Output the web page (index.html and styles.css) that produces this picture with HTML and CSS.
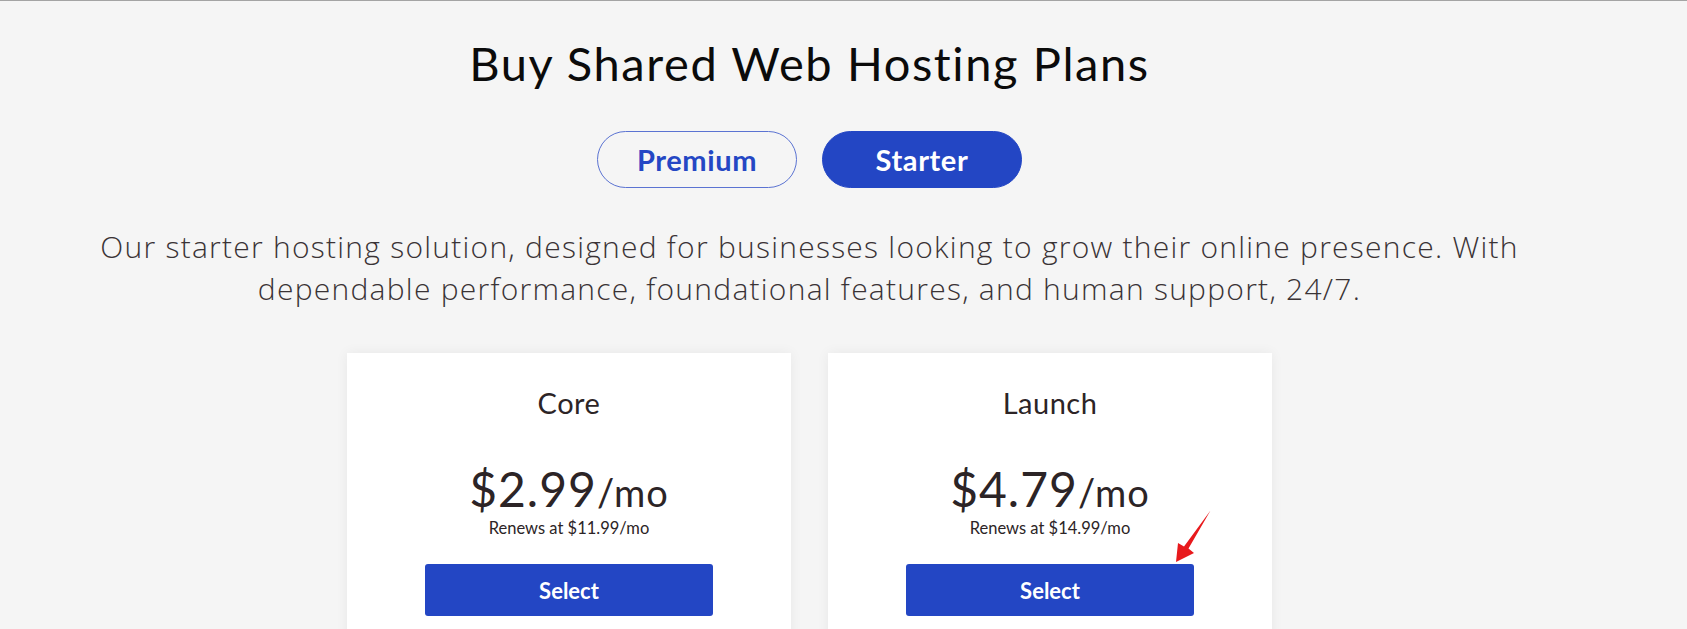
FILE: index.html
```html
<!DOCTYPE html>
<html lang="en">
<head>
<meta charset="utf-8">
<title>Buy Shared Web Hosting Plans</title>
<link rel="stylesheet" href="styles.css">
</head>
<body>
<main class="page">
  <h1 class="title">Buy Shared Web Hosting Plans</h1>
  <div class="tabs">
    <button class="tab tab-outline">Premium</button>
    <button class="tab tab-active">Starter</button>
  </div>
  <p class="desc"><span class="line">Our starter hosting solution, designed for businesses looking to grow their online presence. With</span> <span class="line">dependable performance, foundational features, and human support, 24/7.</span></p>
  <section class="cards">
    <div class="card">
      <h2 class="plan">Core</h2>
      <div class="price"><span class="amount">$2.99</span><span class="per">/mo</span></div>
      <div class="renew">Renews at $11.99/mo</div>
      <button class="select">Select</button>
    </div>
    <div class="card">
      <h2 class="plan">Launch</h2>
      <div class="price"><span class="amount">$4.79</span><span class="per">/mo</span></div>
      <div class="renew">Renews at $14.99/mo</div>
      <button class="select">Select</button>
    </div>
  </section>
  <svg class="arrow" width="60" height="70" viewBox="1160 500 60 70" xmlns="http://www.w3.org/2000/svg">
    <polygon points="1210.5,510.5 1188.5,548.5 1194,553 1176,562 1178,543 1184,546.5" fill="#e8191c"/>
  </svg>
</main>
</body>
</html>
```
FILE: styles.css
```css
html, body {
  margin: 0;
  padding: 0;
}
body {
  background: #f5f5f5;
  border-top: 1px solid #a4a4a4;
  height: 628px;
  overflow: hidden;
}
.page {
  position: relative;
  width: 1619px;
  display: flex;
  flex-direction: column;
  align-items: center;
  text-align: center;
}
.title {
  margin: 34px 0 0;
  font-family: "Lato", sans-serif;
  font-weight: 400;
  font-size: 47px;
  letter-spacing: 1.6px;
  line-height: 56px;
  color: #0b0b0b;
}
.tabs {
  display: flex;
  gap: 25px;
  margin-top: 40px;
}
.tab {
  width: 200px;
  height: 57px;
  border-radius: 29px;
  font-family: "Lato", sans-serif;
  font-weight: 700;
  font-size: 29px;
  letter-spacing: 0.6px;
  padding: 0;
}
.tab-outline {
  background: transparent;
  border: 1px solid #5b73d2;
  color: #2447c4;
}
.tab-active {
  background: #2346c4;
  border: 1px solid #2346c4;
  color: #fff;
}
.desc {
  margin: 38px 0 0;
  font-family: "Open Sans", sans-serif;
  font-weight: 300;
  font-size: 30px;
  letter-spacing: 1.25px;
  line-height: 42px;
  color: #3a3335;
}
.line {
  display: block;
}
.cards {
  display: flex;
  gap: 37px;
  margin-top: 43px;
}
.card {
  width: 444px;
  height: 320px;
  box-sizing: border-box;
  background: #fff;
  box-shadow: 0 0 12px rgba(0, 0, 0, 0.06);
  padding-top: 33px;
  display: flex;
  flex-direction: column;
  align-items: center;
  color: #2c2426;
}
.plan {
  margin: 0;
  font-family: "Lato", sans-serif;
  font-weight: 400;
  font-size: 29px;
  letter-spacing: 0.5px;
  line-height: 34px;
}
.price {
  margin-top: 51px;
  font-family: "Lato", sans-serif;
  font-weight: 400;
  line-height: 35px;
  letter-spacing: 1px;
}
.amount {
  font-size: 48px;
}
.per {
  font-size: 38px;
}
.renew {
  font-family: "Lato", sans-serif;
  font-size: 16.5px;
  line-height: 20px;
}
.select {
  margin-top: 26px;
  width: 288px;
  height: 52px;
  border: none;
  border-radius: 3px;
  background: #2346c4;
  color: #fff;
  font-family: "Lato", sans-serif;
  font-weight: 700;
  font-size: 22px;
  padding: 0;
}
.arrow {
  position: absolute;
  left: 1160px;
  top: 499px;
}
```
